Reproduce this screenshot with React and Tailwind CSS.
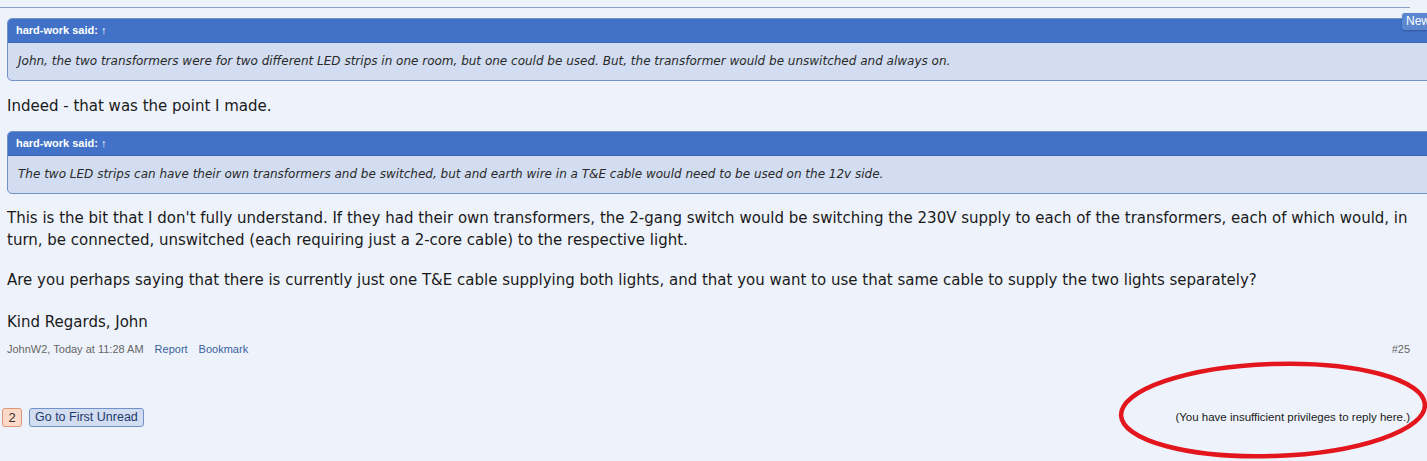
export default function App() {
  const tah = "font-['Liberation_Sans',Arial,sans-serif]";
  return (
    <div className="w-[1427px] h-[461px] overflow-hidden bg-[#eef3fb] relative font-['DejaVu_Sans',Verdana,sans-serif] text-[#1a1a1a]">
      <div className="h-[7px]" />
      <div className="w-[1410px] h-px bg-[#8aa2c2]" />
      <div className={`absolute left-[1402px] top-[13px] h-[17px] px-[4px] rounded-[3px] bg-[#5b86d0] text-white text-[12px] leading-[17px] shadow-[0_1px_2px_rgba(0,0,0,0.25)] ${tah}`}>
        New
      </div>
      <div className="pl-[7px] w-[1445px]">
        <div className="mt-[10px] border border-[#6f92c9] rounded-[5px] overflow-hidden bg-[#d2ddf1]">
          <div className={`h-[24px] bg-[#4172c8] text-white font-bold text-[11px] leading-[23px] pl-[8px] border-b border-[#3a65b0] ${tah}`}>
            hard-work said: ↑
          </div>
          <div className="h-[37px] pl-[10px] italic text-[12px] leading-[37px] text-[#2a2a2a]">
            John, the two transformers were for two different LED strips in one room, but one could be used. But, the transformer would be unswitched and always on.
          </div>
        </div>
        <p className="mt-[15px] text-[15px] leading-[20px]">Indeed - that was the point I made.</p>
        <div className="mt-[15px] border border-[#6f92c9] rounded-[5px] overflow-hidden bg-[#d2ddf1]">
          <div className={`h-[24px] bg-[#4172c8] text-white font-bold text-[11px] leading-[23px] pl-[8px] border-b border-[#3a65b0] ${tah}`}>
            hard-work said: ↑
          </div>
          <div className="h-[37px] pl-[10px] italic text-[12px] leading-[37px] text-[#2a2a2a]">
            The two LED strips can have their own transformers and be switched, but and earth wire in a T&amp;E cable would need to be used on the 12v side.
          </div>
        </div>
        <div className="text-[15px] leading-[22px] w-[1420px]">
          <p className="mt-[13px]">
            This is the bit that I don't fully understand. If they had their own transformers, the 2-gang switch would be switching the 230V supply to each of the transformers, each of which would, in turn, be connected, unswitched (each requiring just a 2-core cable) to the respective light.
          </p>
          <p className="mt-[18px]">
            Are you perhaps saying that there is currently just one T&amp;E cable supplying both lights, and that you want to use that same cable to supply the two lights separately?
          </p>
          <p className="mt-[20px]">Kind Regards, John</p>
        </div>
      </div>
      <div className={`pl-[7px] w-[1427px] pr-[17px] mt-[9px] flex justify-between text-[11px] leading-[14px] text-[#666] ${tah}`}>
        <div className="flex gap-[11px]">
          <span>JohnW2, Today at 11:28 AM</span>
          <span className="text-[#3b5f9e]">Report</span>
          <span className="text-[#3b5f9e]">Bookmark</span>
        </div>
        <span>#25</span>
      </div>
      <div className="mt-[52px] pl-[2px] pr-[17px] flex items-center justify-between">
        <div className="flex items-center gap-[7px]">
          <span className={`h-[19px] w-[20px] flex items-center justify-center rounded-[3px] border border-[#e29474] bg-[#fcd9c9] text-[13px] text-[#333] ${tah}`}>2</span>
          <span className={`h-[19px] px-[5px] flex items-center rounded-[3px] border border-[#6f92c9] bg-[#d2ddf1] text-[12.5px] text-[#1e3a6d] ${tah}`}>Go to First Unread</span>
        </div>
        <span className={`text-[11.5px] text-[#1a1a1a] ${tah}`}>(You have insufficient privileges to reply here.)</span>
      </div>
      <svg className="absolute left-0 top-0 pointer-events-none" width="1427" height="461">
        <ellipse cx="1273" cy="410" rx="152" ry="46" fill="none" stroke="#e3161d" strokeWidth="4.5" transform="rotate(-2 1273 410)" />
      </svg>
    </div>
  );
}
